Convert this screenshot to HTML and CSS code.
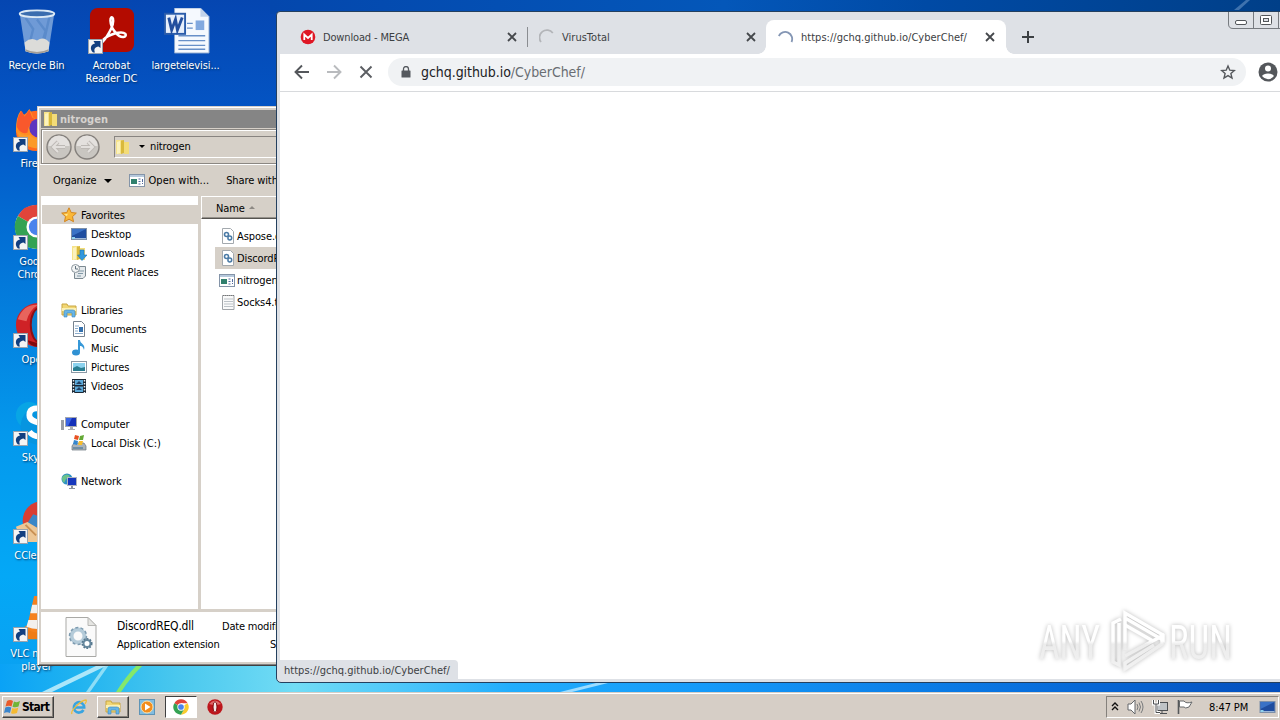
FILE: index.html
```html
<!DOCTYPE html>
<html lang="en">
<head>
  <meta charset="UTF-8">
  <title>Desktop</title>
  <link rel="stylesheet" href="styles.css">
</head>
<body>
  <svg class="defs" width="0" height="0">
    <symbol id="shortcut" viewBox="0 0 15 15">
      <rect x=".5" y=".5" width="14" height="14" fill="#f4f4f4" stroke="#9aa3ad"/>
      <path d="M5 13.500C1.500 10 2.500 5.500 7 4.500L5.500 2H12.500V9L10.500 7.500C7 8 5.500 10 7 13.500Z" fill="#123f80"/>
    </symbol>
    <symbol id="folder" viewBox="0 0 16 16">
      <path d="M1 1H7V15H1Z" fill="#f6e38a"/>
      <path d="M6 1.500L9 1V14L6 15Z" fill="#d9b93c"/>
      <path d="M9 3H14V15H9Z" fill="#f3dc78"/>
      <path d="M2 3L5 2V14L2 15Z" fill="#fbf2bd"/>
    </symbol>
    <symbol id="library" viewBox="0 0 16 16">
      <path d="M1 2H6L7 4H15V13H1Z" fill="#f1d674" stroke="#c9a640"/>
      <path d="M1 6H15V9H1Z" fill="#fbf0b4"/>
      <path d="M3 15V10Q3 8 5 8H12Q14 8 14 10V15H11V11H6V15Z" fill="#68b5e6" stroke="#3b86bf" stroke-width=".6"/>
    </symbol>
    <symbol id="monitor" viewBox="0 0 16 16">
      <rect x=".5" y="2.500" width="15" height="11" fill="#1f4d9f" stroke="#7e90a8"/>
      <path d="M1 3H15L1 10Z" fill="#3a72c6"/>
      <path d="M1 12H15V13H1Z" fill="#9db7d8"/>
      <path d="M1 11H4V13H1Z" fill="#8fd2ed"/>
    </symbol>
    <symbol id="dll" viewBox="0 0 14 16">
      <path d="M1.500 .5H9.500L12.500 3.500V15.500H1.500Z" fill="#fff" stroke="#a3a9ae"/>
      <circle cx="5.500" cy="6.500" r="2" fill="none" stroke="#4b7ba6" stroke-width="1.600"/>
      <circle cx="8.800" cy="10" r="1.900" fill="none" stroke="#4b7ba6" stroke-width="1.500"/>
    </symbol>
    <symbol id="program" viewBox="0 0 16 13">
      <rect x=".5" y=".5" width="15" height="12" fill="#fff" stroke="#8494a8"/>
      <path d="M1 1H15V3H1Z" fill="#b7c9dd"/>
      <path d="M2 5H8V10H2Z" fill="#30806d"/>
      <path d="M9.500 5H11.500M9.500 7.500H11.500M9.500 10H11.500M13.500 5V8M13.500 9V10" stroke="#536a9f"/>
    </symbol>
    <symbol id="chrome" viewBox="0 0 48 48">
      <circle cx="24" cy="24" r="23" fill="#fff"/>
      <path d="M24 24L4 12.500A23 23 0 0 1 44 12.500H24Z" fill="#e0443a"/>
      <path d="M24 24L44 12.500A23 23 0 0 1 24 47L34 29Z" fill="#f9cb2e"/>
      <path d="M24 24L34 29L24 47A23 23 0 0 1 4 12.500Z" fill="#34a253"/>
      <circle cx="24" cy="24" r="11" fill="#fff"/>
      <circle cx="24" cy="24" r="8.500" fill="#4a83ec"/>
    </symbol>
    <symbol id="close" viewBox="0 0 10 10">
      <path d="M1 1L9 9M9 1L1 9" stroke="#45484c" stroke-width="1.800"/>
    </symbol>
  </svg>

  <div class="desktop">
    <svg class="wallpaper" viewBox="0 0 1280 720" preserveAspectRatio="none">
      <defs>
        <linearGradient id="sky" x1="0" y1="0" x2="0" y2="1">
          <stop offset="0" stop-color="#0546b1"/>
          <stop offset=".17" stop-color="#0356c6"/>
          <stop offset=".35" stop-color="#0372d6"/>
          <stop offset=".6" stop-color="#0498ec"/>
          <stop offset=".8" stop-color="#04a8f6"/>
          <stop offset="1" stop-color="#0c9ef0"/>
        </linearGradient>
        <linearGradient id="top" x1="0" y1="0" x2="1" y2="0">
          <stop offset="0" stop-color="#0447ad"/>
          <stop offset=".45" stop-color="#0457b9"/>
          <stop offset=".65" stop-color="#004aa5"/>
          <stop offset="1" stop-color="#003f88"/>
        </linearGradient>
        <linearGradient id="floor" x1="0" y1="0" x2="1" y2="0">
          <stop offset="0" stop-color="#0aa2f6"/>
          <stop offset=".06" stop-color="#20b3f0"/>
          <stop offset=".14" stop-color="#4ac8ee"/>
          <stop offset=".23" stop-color="#72dcf5"/>
          <stop offset=".31" stop-color="#4fc8fa"/>
          <stop offset=".4" stop-color="#22adfc"/>
          <stop offset=".55" stop-color="#159af9"/>
          <stop offset=".8" stop-color="#0870de"/>
          <stop offset="1" stop-color="#044ebc"/>
        </linearGradient>
      </defs>
      <rect width="1280" height="720" fill="url(#sky)"/>
      <rect x="270" width="1010" height="14" fill="url(#top)"/>
      <rect y="664" width="1280" height="30" fill="url(#floor)"/>
      <path d="M42 692L98 665H108L52 692Z" fill="#c5f0fb" opacity=".85"/>
      <path d="M86 692L105 665H109L90 692Z" fill="#b8eefa" opacity=".7"/>
      <path d="M116 692Q126 676 137 665H143Q130 678 121 692Z" fill="#84e86a"/>
      <path d="M560 692L600 682H612L572 692Z" fill="#9ddcff"/>
      <path d="M1234 10L1246 0H1250L1239 10Z" fill="#3e72ae"/>
    </svg>

    <div class="shortcut recycle">
      <svg viewBox="0 0 48 48">
        <path d="M6 6L12 45Q24 50 36 45L42 6Z" fill="#a9c6e8" opacity=".65"/>
        <path d="M12 10L20 22L17 34M24 12L33 24L30 34M37 9L31 36" fill="none" stroke="#5b8bcb" stroke-width="2.500"/>
        <path d="M11 36Q18 30 24 34Q31 29 37 36L36 45Q24 50 12 45Z" fill="#dcdcd9"/>
        <path d="M12 43Q24 49 36 43V45Q24 50 12 45Z" fill="#a39d96"/>
        <ellipse cx="24" cy="6" rx="18" ry="3.500" fill="#3b6daf" stroke="#dce9f5" stroke-width="2"/>
      </svg>
      <span>Recycle Bin</span>
    </div>
    <div class="shortcut acrobat">
      <svg viewBox="0 0 48 48">
        <rect x="1" width="46" height="46" rx="8" fill="#b30b00"/>
        <path d="M12 37C17 34 27 18 25 11C22 6 20 17 28 26C34 33 40 30 38 27C34 23 20 28 15 33Q10 38 12 37Z" fill="none" stroke="#fff" stroke-width="2.600"/>
      </svg>
      <svg class="arrow"><use href="#shortcut"/></svg>
      <span>Acrobat<br>Reader DC</span>
    </div>
    <div class="shortcut word">
      <svg viewBox="0 0 48 48">
        <path d="M11 0H38L47 9V47H11Z" fill="#f5f9fe" stroke="#8ba6cf"/>
        <path d="M38 0V9H47Z" fill="#c2d3ea"/>
        <path d="M15 29H43M15 34H43M15 39H43M15 43H43M24 16H30M24 21H30" stroke="#6890c8" stroke-width="1.400"/>
        <rect x="33" y="13" width="9" height="10" fill="#82a9df"/>
        <rect x="1" y="6" width="21" height="21" fill="#e7effb" stroke="#2a5caa" stroke-width="2"/>
        <path d="M5 10L8 23L12 12L14 23L19 10" fill="none" stroke="#234f9e" stroke-width="3"/>
      </svg>
      <span>largetelevisi...</span>
    </div>
    <div class="shortcut firefox">
      <svg viewBox="0 0 48 48">
        <circle cx="23" cy="26" r="21" fill="#ff6a22"/>
        <path d="M2 26Q2 11 7 5L11 10L16 3Q19 7 20 12L34 20V38Q16 48 6 36Z" fill="#ff8e22"/>
        <path d="M3 22Q3 11 8 5L11 11L16 4L19 12L25 16Q14 18 14 28Q7 30 3 22Z" fill="#f9582c"/>
        <circle cx="26" cy="23" r="10" fill="#5e35c0"/>
        <path d="M4 27Q12 32 17 30Q21 36 30 34V44Q10 46 4 27Z" fill="#fb9a2a"/>
      </svg>
      <svg class="arrow"><use href="#shortcut"/></svg>
      <span>Firefox</span>
    </div>
    <div class="shortcut google">
      <svg><use href="#chrome"/></svg>
      <svg class="arrow"><use href="#shortcut"/></svg>
      <span>Google<br>Chrome</span>
    </div>
    <div class="shortcut opera">
      <svg viewBox="0 0 48 48">
        <ellipse cx="25" cy="24" rx="23" ry="23" fill="#cf2226"/>
        <path d="M4 18Q10 2 25 3Q16 8 13 20Z" fill="#e8645d"/>
        <path d="M14 40Q16 46 25 47V43Z" fill="#7f090e"/>
        <ellipse cx="27" cy="24" rx="9.500" ry="18" fill="#0b80cf" stroke="#8d0f14" stroke-width="2"/>
      </svg>
      <svg class="arrow"><use href="#shortcut"/></svg>
      <span>Opera</span>
    </div>
    <div class="shortcut skype">
      <svg viewBox="0 0 48 48">
        <circle cx="16" cy="16" r="14" fill="#08a5e5"/>
        <circle cx="27" cy="27" r="20" fill="#0795e0"/>
        <path d="M36 12Q16 4 16 16C16 26 36 22 36 31C36 40 21 40 16 33" fill="none" stroke="#fff" stroke-width="6"/>
      </svg>
      <svg class="arrow"><use href="#shortcut"/></svg>
      <span>Skype</span>
    </div>
    <div class="shortcut ccleaner">
      <svg viewBox="0 0 48 48">
        <circle cx="30" cy="24" r="21" fill="#d93e32"/>
        <path d="M14 26L20 17L34 22L26 32Z" fill="#3a87c7"/>
        <path d="M2 30L14 25L29 34L25 46H8Z" fill="#edc796"/>
        <path d="M12 28L23 39" stroke="#c89054" stroke-width="2"/>
      </svg>
      <svg class="arrow"><use href="#shortcut"/></svg>
      <span>CCleaner</span>
    </div>
    <div class="shortcut vlc">
      <svg viewBox="0 0 48 48">
        <path d="M8 39L12 31H37L42 45H6Z" fill="#ef7c17"/>
        <path d="M21 0H27L37 35Q25 41 13 35Z" fill="#f5811e"/>
        <path d="M19 9H30L32 18H17ZM15 25H34L36 32Q25 37 13 32Z" fill="#f3f0ed"/>
      </svg>
      <svg class="arrow"><use href="#shortcut"/></svg>
      <span>VLC media<br>player</span>
    </div>

    <div class="explorer">
      <div class="title-bar">
        <svg width="16" height="16"><use href="#folder"/></svg>
        <span>nitrogen</span>
      </div>
      <div class="address-row">
        <svg class="nav-buttons" width="56" height="28" viewBox="0 0 56 28">
          <circle cx="14" cy="14" r="12" fill="#c9c6c1" stroke="#85817d" stroke-width="1.400"/>
          <path d="M3.500 13A10.500 10.500 0 0 1 24.500 13Z" fill="#e4e1de"/>
          <path d="M20 14H9M13 9L8 14L13 19" fill="none" stroke="#bdb9b5" stroke-width="4"/>
          <path d="M20 14H9M13 9L8 14L13 19" fill="none" stroke="#e3e0dd" stroke-width="2"/>
          <circle cx="42" cy="14" r="12" fill="#c9c6c1" stroke="#85817d" stroke-width="1.400"/>
          <path d="M31.500 13A10.500 10.500 0 0 1 52.500 13Z" fill="#e4e1de"/>
          <path d="M36 14H47M43 9L48 14L43 19" fill="none" stroke="#bdb9b5" stroke-width="4"/>
          <path d="M36 14H47M43 9L48 14L43 19" fill="none" stroke="#e3e0dd" stroke-width="2"/>
        </svg>
        <div class="address">
          <svg width="16" height="16"><use href="#folder"/></svg>
          <i class="caret small"></i>
          <span>nitrogen</span>
        </div>
      </div>
      <div class="command-bar">
        <span>Organize</span>
        <i class="caret"></i>
        <svg width="16" height="13"><use href="#program"/></svg>
        <span class="open">Open with...</span>
        <span class="share">Share with</span>
      </div>
      <div class="panes">
        <ul class="tree">
          <li class="root current">
            <svg viewBox="0 0 16 16"><path d="M8 .8L10.200 5.500L15.300 6.100L11.500 9.600L12.500 14.700L8 12.200L3.500 14.700L4.500 9.600L.7 6.100L5.800 5.500Z" fill="#fab838" stroke="#d28520"/><path d="M8 3L6.500 7L3 7.500L6 9Z" fill="#fff0a0"/></svg>
            Favorites
          </li>
          <li><svg><use href="#monitor"/></svg>Desktop</li>
          <li><svg viewBox="0 0 16 16"><use href="#folder" width="16" height="16"/><path d="M9 5H13V10H16L11 15.500L6.500 10H9Z" fill="#3198dd" stroke="#1774b2" stroke-width=".6"/></svg>Downloads</li>
          <li><svg viewBox="0 0 16 16"><path d="M5.500 2.500H14.500V12L12 14.500H3.500V9" fill="#e4e9ec" stroke="#7c8991"/><path d="M7 7H13M7 9.500H12M6 12H10" stroke="#8198a6"/><circle cx="4.500" cy="4.500" r="4" fill="#f3f5f5" stroke="#8b959c"/><path d="M4.500 2V5H7" fill="none" stroke="#61727e"/></svg>Recent Places</li>
          <li class="root group">
            <svg><use href="#library"/></svg>
            Libraries
          </li>
          <li><svg viewBox="0 0 16 16"><path d="M2.500 .5H10.500L13.500 3.500V15.500H2.500Z" fill="#fff" stroke="#77828e"/><path d="M4 5H8M4 7.500H7M4 10H7M4 12.500H12" stroke="#8aabcb"/><path d="M8 6H12V11H8Z" fill="#3470ad"/></svg>Documents</li>
          <li><svg viewBox="0 0 16 16"><ellipse cx="5" cy="12.500" rx="4" ry="3" fill="#2f91d3"/><path d="M7 12V0H9C9 4 15 4 13 10C12 6 10 6 9 6V12Z" fill="#3698d8"/></svg>Music</li>
          <li><svg viewBox="0 0 16 16"><rect x=".5" y="2.500" width="15" height="11" fill="#fff" stroke="#8b99a5"/><path d="M2 4H14V12H2Z" fill="#8bd2ef"/><path d="M2 9L6 7L10 9L14 8V12H2Z" fill="#297e92"/></svg>Pictures</li>
          <li><svg viewBox="0 0 16 16"><rect x="1" y="1" width="14" height="14" fill="#1b2835"/><path d="M4 2H12V7H4ZM4 8.500H12V14H4Z" fill="#5ba8d8"/><path d="M2.500 2V15M13.500 2V15" stroke="#e8eff5" stroke-width="1.500" stroke-dasharray="1.500 1.500"/><path d="M8 3L11 6H5ZM8 9L11 12H5Z" fill="#213f61"/></svg>Videos</li>
          <li class="root group">
            <svg viewBox="0 0 16 16"><rect x="4.500" y="1.500" width="11" height="9" fill="#1431b9" stroke="#a3a7af"/><path d="M5 2H11L7 10H5Z" fill="#3964e3"/><path d="M9 11H12V13H14V14H7V13H9Z" fill="#a9adb3"/><path d="M0 4H3V14H0Z" fill="#9a9ea6"/></svg>
            Computer
          </li>
          <li><svg viewBox="0 0 16 16"><path d="M1 11L3 8H13L15 11V15H1Z" fill="#aab3bb" stroke="#68737c" stroke-width=".7"/><path d="M4 0L8 1L7 5L3 4Z" fill="#e85122"/><path d="M9 1L13 0L12 5L8 5Z" fill="#64a935"/><path d="M3 5L7 6L6 10L2 9Z" fill="#3587cf"/><path d="M8 6L12 6L11 10L7 10Z" fill="#f7bc2c"/><path d="M2 12H12V14H2Z" fill="#6f8ea4"/></svg>Local Disk (C:)</li>
          <li class="root group">
            <svg viewBox="0 0 16 16"><circle cx="6" cy="6" r="5.500" fill="#2d8fc4"/><path d="M2 3Q6 0 9 3L5 6L3 10Q-.5 6 2 3Z" fill="#6bc38c"/><rect x="6.500" y="4.500" width="9" height="8" fill="#1738bd" stroke="#b0b5c0"/><path d="M10 13H12V15H14V16H8V15H10Z" fill="#8b929c"/></svg>
            Network
          </li>
        </ul>
        <div class="files">
          <div class="column-head">Name <i></i></div>
          <div class="file"><svg width="14" height="16"><use href="#dll"/></svg>Aspose.dll</div>
          <div class="file selected"><svg width="14" height="16"><use href="#dll"/></svg>DiscordREQ.dll</div>
          <div class="file"><svg width="16" height="13"><use href="#program"/></svg>nitrogen.exe</div>
          <div class="file"><svg width="14" height="16" viewBox="0 0 14 16"><path d="M1.500 1.500H13V15.500H1.500Z" fill="#fafafa" stroke="#a0a4a8"/><path d="M3 5H12M3 7.500H12M3 10H12M3 12.500H12" stroke="#bcc2c7"/><path d="M2 1.500H13" stroke="#777" stroke-dasharray="1 1"/></svg>Socks4.txt</div>
        </div>
      </div>
      <div class="details">
        <svg width="32" height="40" viewBox="0 0 32 40">
          <path d="M1 .5H23L31 8.500V39.500H1Z" fill="#fafafa" stroke="#a9a9a6"/>
          <path d="M23 .5V8.500H31Z" fill="#e5e5e2" stroke="#b7b7b4"/>
          <circle cx="13" cy="19" r="6.500" fill="none" stroke="#b4cbd9" stroke-width="4"/>
          <circle cx="13" cy="19" r="8.500" fill="none" stroke="#7d9bb0" stroke-width="1.500" stroke-dasharray="3 2.300"/>
          <circle cx="22" cy="26.500" r="3.500" fill="#fff" stroke="#66889e" stroke-width="2"/>
          <circle cx="22" cy="26.500" r="4.800" fill="none" stroke="#56788e" stroke-width="1.500" stroke-dasharray="1.800 1.300"/>
        </svg>
        <div class="file-info">
          <span class="name">DiscordREQ.dll</span>
          <span>Application extension</span>
        </div>
        <div class="file-info meta">
          <span>Date modified:</span>
          <span>Size:</span>
        </div>
      </div>
    </div>

    <div class="browser">
      <div class="tab-strip">
        <div class="tab">
          <svg class="favicon" viewBox="0 0 16 16"><circle cx="8" cy="8" r="7.300" fill="#df1725"/><path d="M4.300 11V5.500L8 9L11.700 5.500V11" fill="none" stroke="#fff" stroke-width="1.800"/></svg>
          <span>Download - MEGA</span>
          <svg class="close"><use href="#close"/></svg>
        </div>
        <div class="tab divided">
          <svg class="favicon" viewBox="0 0 16 16"><path d="M2 13A7 7 0 0 1 13.800 4" fill="none" stroke="#b3b5b9" stroke-width="1.800"/></svg>
          <span>VirusTotal</span>
          <svg class="close"><use href="#close"/></svg>
        </div>
        <div class="tab active">
          <svg class="favicon" viewBox="0 0 16 16"><path d="M.8 7A7 7 0 0 1 13.500 13" fill="none" stroke="#8496b4" stroke-width="1.800"/></svg>
          <span>https://gchq.github.io/CyberChef/</span>
          <svg class="close"><use href="#close"/></svg>
        </div>
        <svg class="new-tab" viewBox="0 0 12 12"><path d="M6 0V12M0 6H12" stroke="#3c4043" stroke-width="2"/></svg>
        <svg class="caption-buttons" viewBox="0 0 52 17">
          <path d="M.5 0V12Q.5 16.500 5 16.500H52M25.500 0V16.500M50.500 0V16.500" fill="none" stroke="#777b80"/>
          <rect x="7.500" y="8.500" width="11" height="4" rx="1.500" fill="#fff" stroke="#53575b"/>
          <rect x="32.500" y="3.500" width="11" height="9" rx="1" fill="#fff" stroke="#53575b"/>
          <rect x="35.500" y="6.500" width="5" height="3" fill="#dee1e6" stroke="#53575b"/>
        </svg>
      </div>
      <div class="toolbar">
        <svg class="tool" viewBox="0 0 16 16"><path d="M15 8H2M8 1.500L1.500 8L8 14.500" fill="none" stroke="#54575b" stroke-width="1.900"/></svg>
        <svg class="tool" viewBox="0 0 16 16"><path d="M1 8H14M8 1.500L14.500 8L8 14.500" fill="none" stroke="#b9bbbe" stroke-width="1.900"/></svg>
        <svg class="tool" viewBox="0 0 16 16"><path d="M2.500 2.500L13.500 13.500M13.500 2.500L2.500 13.500" stroke="#5b5e62" stroke-width="1.900"/></svg>
        <div class="omnibox">
          <svg class="lock" viewBox="0 0 10 12"><path d="M1 4.500H9Q9.500 4.500 9.500 5V11Q9.500 11.500 9 11.500H1Q.5 11.500 .5 11V5Q.5 4.500 1 4.500Z" fill="#55595e"/><path d="M2.500 5V3A2.500 2.500 0 0 1 7.500 3V5" fill="none" stroke="#55595e" stroke-width="1.300"/></svg>
          <span class="url">gchq.github.io<span>/CyberChef/</span></span>
          <svg class="star" viewBox="0 0 16 16"><path d="M8 2L9.800 6.200L14.300 6.600L10.900 9.600L12 14L8 11.600L4 14L5.100 9.600L1.700 6.600L6.200 6.200Z" fill="none" stroke="#54575b" stroke-width="1.400"/></svg>
        </div>
        <svg class="avatar" viewBox="0 0 20 20"><circle cx="10" cy="10" r="9.500" fill="#54575b"/><circle cx="10" cy="6.500" r="3" fill="#fff"/><path d="M4 14Q5.500 11.500 10 11.500T16 14Q13.500 17.200 10 17.200T4 14Z" fill="#fff"/></svg>
      </div>
      <div class="page">
        <svg class="watermark" viewBox="0 0 200 66">
          <defs>
            <linearGradient id="mark" gradientUnits="userSpaceOnUse" x1="0" y1="0" x2="0" y2="66">
              <stop offset="0" stop-color="#fff"/>
              <stop offset=".5" stop-color="#fff"/>
              <stop offset=".55" stop-color="#ececec"/>
              <stop offset="1" stop-color="#f3f3f3"/>
            </linearGradient>
          </defs>
          <g fill="url(#mark)">
            <text x="3" y="51" textLength="61" lengthAdjust="spacingAndGlyphs">ANY</text>
            <text x="133" y="51" textLength="63" lengthAdjust="spacingAndGlyphs">RUN</text>
          </g>
          <g fill="none" stroke="url(#mark)" stroke-width="3.500">
            <path d="M85 11L77 15V54L83 57V15"/>
            <path d="M89 42V5L127 27V32L89 10"/>
            <path d="M89 48L126 28V36L89 61V55L118 37"/>
            <path d="M89 17L117 33"/>
          </g>
        </svg>
        <div class="status">https://gchq.github.io/CyberChef/</div>
      </div>
    </div>

    <div class="taskbar">
      <button class="start">
        <svg viewBox="0 0 17 16"><path d="M3 2Q6 0 9 2L7.500 7.500Q5 6 1.500 7.500Z" fill="#e95a2a"/><path d="M10 2.500Q13 4 16 2L14.500 7.500Q11.500 9 8.500 7.700Z" fill="#70b536"/><path d="M1.300 8.500Q4.500 7 7.300 8.500L6 14Q3 12.500 0 14Z" fill="#3a85cc"/><path d="M8.300 9Q11.500 10.300 14.300 8.500L13 14Q10 15.500 7 14.300Z" fill="#f5ba32"/></svg>
        Start
      </button>
      <div class="task">
        <svg viewBox="0 0 16 16"><path d="M12.500 11A5.200 5.200 0 1 1 13.200 8.500H4" fill="none" stroke="#38a4e0" stroke-width="2.600"/><path d="M1 15C-1 12 10 1 15 1Q16 2 14 5" fill="none" stroke="#eebd38" stroke-width="1.300"/></svg>
      </div>
      <div class="task raised"><svg><use href="#library"/></svg></div>
      <div class="task">
        <svg viewBox="0 0 16 16"><rect x=".5" y=".5" width="15" height="15" fill="#81bde1" stroke="#5e94b6"/><circle cx="8" cy="8" r="6" fill="#f28d1d" stroke="#ffe1a8"/><path d="M6 4.500L11.500 8L6 11.500Z" fill="#fff"/></svg>
      </div>
      <div class="task pressed"><svg><use href="#chrome"/></svg></div>
      <div class="task">
        <svg viewBox="0 0 16 16"><circle cx="8" cy="8" r="7.700" fill="#bd161c"/><path d="M2 5Q8-2 14 5Q8 7 2 5Z" fill="#df696a"/><ellipse cx="8" cy="8" rx="2" ry="5.300" fill="#f5e9e8" stroke="#820c11"/></svg>
      </div>
      <div class="tray">
        <svg width="8" height="10" viewBox="0 0 8 10"><path d="M1 4L4 1L7 4M1 8L4 5L7 8" fill="none" stroke="#111" stroke-width="1.400"/></svg>
        <svg width="17" height="16" viewBox="0 0 17 16"><path d="M1 5H4L8 1V15L4 11H1Z" fill="#fff" stroke="#64676a"/><path d="M10 5Q12 8 10 11M12 3.500Q15 8 12 12.500M14 2Q18 8 14 14" fill="none" stroke="#777a7c"/></svg>
        <svg width="17" height="16" viewBox="0 0 17 16"><rect x="5.500" y="3.500" width="10" height="8" fill="#bfc3c6" stroke="#4c4f52"/><path d="M8 14.500H15M10 12V14" stroke="#4c4f52"/><path d="M1.500 1V5H6.500V1M4 5V13.500H8" fill="none" stroke="#fff" stroke-width="3"/><path d="M1.500 1V5H6.500V1M4 5V13.500H8" fill="none" stroke="#4c4f52"/></svg>
        <svg width="17" height="16" viewBox="0 0 17 16"><path d="M1.500 1V15" stroke="#55585a" stroke-width="1.600"/><path d="M2.500 2H7Q9 5 15 3L12 8Q8 10 7 8H2.500Z" fill="#fff" stroke="#66696b"/></svg>
        <span>8:47 PM</span>
        <svg width="17" height="16"><use href="#monitor"/></svg>
      </div>
    </div>
  </div>
</body>
</html>
```

FILE: styles.css
```css
* {
  box-sizing: border-box;
}
body {
  margin: 0;
  font-family: "DejaVu Sans Condensed", "DejaVu Sans", Tahoma, sans-serif;
  font-stretch: condensed;
  font-size: 11px;
  line-height: 13px;
  letter-spacing: -0.1px;
  color: #000;
}
svg {
  display: block;
  flex: none;
}
.defs {
  position: absolute;
}
.desktop {
  position: relative;
  width: 1280px;
  height: 720px;
  overflow: hidden;
}
.wallpaper {
  width: 1280px;
  height: 720px;
}

/* desktop shortcuts */
.shortcut {
  position: absolute;
  left: -1px;
  width: 75px;
  display: flex;
  flex-direction: column;
  align-items: center;
  color: #fff;
  text-align: center;
  white-space: nowrap;
  text-shadow: 1px 1px 2px #003060;
}
.shortcut svg {
  width: 46px;
  height: 46px;
  margin-bottom: 5px;
}
.shortcut .arrow {
  position: absolute;
  left: 14px;
  top: 31px;
  width: 15px;
  height: 15px;
}
.recycle { top: 8px; }
.acrobat { top: 8px; left: 74px; }
.word { top: 8px; left: 148px; }
.word svg { margin-left: 2px; }
.firefox { top: 106px; }
.google { top: 204px; }
.opera { top: 302px; }
.skype { top: 400px; }
.ccleaner { top: 498px; }
.vlc { top: 596px; }

/* explorer window */
.explorer {
  position: absolute;
  left: 37px;
  top: 106px;
  width: 700px;
  height: 560px;
  display: flex;
  flex-direction: column;
  padding: 2px;
  border: 1px solid #d6d0ca;
  border-right-color: #404040;
  border-bottom-color: #404040;
  box-shadow: inset 1px 1px #fff, inset -1px -1px #808080;
  background: #d6d0c8;
}
.title-bar {
  display: flex;
  align-items: center;
  gap: 1px;
  height: 18px;
  margin: 1px 1px 0;
  padding-left: 2px;
  background: #858585;
  color: #d6d2ce;
  font-weight: bold;
}
.title-bar span {
  letter-spacing: 0.05px;
}
.address-row {
  display: flex;
  align-items: center;
  height: 35px;
  margin: 1px 1px 0;
  padding-left: 3px;
  border: 1px solid #8b8782;
  box-shadow: inset 1px 1px #fff;
}
.address {
  display: flex;
  align-items: center;
  flex: 1;
  height: 22px;
  margin-left: 13px;
  border: 1px solid #888480;
  border-right-color: #fff;
  border-bottom-color: #fff;
}
.address span {
  margin-left: 5px;
}
.caret {
  border: 4px solid transparent;
  border-top-color: #000;
  border-bottom: 0;
}
.caret.small {
  border-width: 3px 3px 0;
  margin-left: 8px;
}
.command-bar {
  display: flex;
  align-items: center;
  height: 32px;
  padding-left: 13px;
  border-top: 1px solid #fff;
  white-space: nowrap;
}
.command-bar .caret {
  margin: 0 17px 0 7px;
}
.command-bar svg {
  margin-right: 4px;
}
.command-bar .open {
  letter-spacing: 0.05px;
}
.command-bar .share {
  margin-left: 17px;
}
.panes {
  display: flex;
  height: 413px;
  margin-left: 1px;
}
.tree {
  width: 157px;
  margin: 0;
  padding: 9px 0 0;
  background: #fff;
  list-style: none;
}
.tree li {
  display: flex;
  align-items: center;
  gap: 4px;
  height: 19px;
  padding: 2px 0 0 30px;
}
.tree .root {
  padding-left: 20px;
}
.tree .group {
  margin-top: 19px;
}
.tree .current {
  margin-left: 1px;
  padding-left: 19px;
  background: #d6d0c8;
}
.tree svg {
  width: 16px;
  height: 16px;
  margin-top: -2px;
}
.files {
  flex: 1;
  margin-left: 3px;
  background: #fff;
}
.column-head {
  display: flex;
  align-items: center;
  gap: 4px;
  height: 23px;
  margin-bottom: 6px;
  padding: 2px 0 0 14px;
  border-top: 1px solid #fff;
  border-left: 1px solid #fff;
  border-bottom: 1px solid #55534f;
  box-shadow: inset 0 -1px #95918b;
  background: #d6d0c8;
}
.column-head i {
  margin-top: -2px;
  border: 3px solid transparent;
  border-top: 0;
  border-bottom-color: #8d8984;
}
.file {
  display: flex;
  align-items: center;
  height: 22px;
  margin-left: 14px;
  padding-left: 6px;
}
.file svg {
  margin-right: 2px;
}
.file svg[width="16"] {
  margin-left: -2px;
}
.file.selected {
  background: #d6d0c8;
}
.details {
  display: flex;
  flex: 1;
  margin: 3px 1px 1px;
  padding: 5px 0 0 24px;
  background: #fff;
}
.file-info {
  display: flex;
  flex-direction: column;
  gap: 5px;
  width: 105px;
  margin-left: 20px;
  padding-top: 3px;
  white-space: nowrap;
  letter-spacing: -0.2px;
}
.file-info .name {
  font-size: 12px;
}
.file-info.meta {
  margin-left: 0;
}
.meta span:last-child {
  margin-left: 48px;
}

/* browser window */
.browser {
  position: absolute;
  left: 276px;
  top: 11px;
  width: 1030px;
  height: 672px;
  display: flex;
  flex-direction: column;
  padding: 0 0 3px 3px;
  border: 1px solid #24405f;
  border-radius: 4px 0 0 5px;
  background: #dee1e6;
}
.tab-strip {
  display: flex;
  height: 42px;
  padding-top: 8px;
}
.tab {
  position: relative;
  display: flex;
  align-items: center;
  width: 247px;
  height: 34px;
  padding: 0 10px 0 20px;
  color: #3c4043;
}
.tab span {
  letter-spacing: 0.02px;
}
.tab:first-child span {
  letter-spacing: -0.15px;
}
.tab .favicon {
  width: 16px;
  height: 16px;
  margin-right: 7px;
}
.tab.divided {
  width: 231px;
  padding: 0 2px 0 12px;
}
.tab.divided::before {
  content: "";
  width: 1px;
  height: 20px;
  margin: 0 11px 0 -12px;
  background: #8a8d91;
}
.tab.active {
  width: 240px;
  margin-left: 8px;
  padding: 0 11px 0 12px;
  border-radius: 8px 8px 0 0;
  background: #fff;
}
.tab.active::before,
.tab.active::after {
  content: "";
  position: absolute;
  bottom: 0;
  left: -8px;
  width: 8px;
  height: 8px;
  background: radial-gradient(circle at 0 0, transparent 7.5px, #fff 8px);
}
.tab.active::after {
  left: 100%;
  background: radial-gradient(circle at 100% 0, transparent 7.5px, #fff 8px);
}
.close {
  width: 10px;
  height: 10px;
  margin-left: auto;
}
.new-tab {
  width: 12px;
  height: 12px;
  margin: 11px 0 0 16px;
}
.caption-buttons {
  width: 52px;
  height: 17px;
  margin: -8px 0 0 194px;
}
.toolbar {
  display: flex;
  align-items: center;
  gap: 16px;
  height: 38px;
  padding: 0 0 2px 14px;
  border-bottom: 1px solid #d8dadd;
  background: #fff;
}
.tool {
  width: 16px;
  height: 16px;
}
.omnibox {
  display: flex;
  align-items: center;
  width: 858px;
  height: 28px;
  margin-left: -2px;
  padding: 0 10px 0 13px;
  border-radius: 14px;
  background: #f0f2f4;
}
.lock {
  width: 10px;
  height: 12px;
}
.url {
  margin-left: 10px;
  color: #202124;
  font-size: 14px;
  line-height: 18px;
  letter-spacing: -0.05px;
}
.url span {
  color: #696d72;
}
.star {
  width: 16px;
  height: 16px;
  margin-left: auto;
}
.avatar {
  width: 20px;
  height: 20px;
  margin-left: -4px;
}
.page {
  position: relative;
  flex: 1;
  background: #fff;
}
.status {
  position: absolute;
  left: 0;
  bottom: 0;
  width: 178px;
  height: 19px;
  padding: 4px 4px 2px;
  border-top-right-radius: 4px;
  background: #dee1e6;
  color: #3c4043;
  letter-spacing: 0.02px;
}
.watermark {
  position: absolute;
  left: 756px;
  top: 516px;
  width: 200px;
  height: 66px;
  overflow: visible;
  font-family: "Liberation Sans Narrow", "Roboto", sans-serif;
  font-size: 49px;
  letter-spacing: 0;
  filter: drop-shadow(0 0 2px #bbb);
}

/* taskbar */
.taskbar {
  position: absolute;
  left: 0;
  bottom: 0;
  width: 1280px;
  height: 28px;
  display: flex;
  align-items: center;
  padding: 1px 1px 0 2px;
  border-top: 1px solid #d6cec6;
  box-shadow: inset 0 1px #fff;
  background: #d6cec6;
}
.start {
  display: flex;
  align-items: center;
  gap: 1px;
  width: 52px;
  height: 22px;
  margin-right: 9px;
  padding: 0 1px;
  border: 1px solid #fff;
  border-right-color: #404040;
  border-bottom-color: #404040;
  box-shadow: inset -1px -1px #858079;
  background: #d6cec6;
  color: #000;
  font: bold 12px "DejaVu Sans Condensed", "DejaVu Sans", sans-serif;
  letter-spacing: -0.7px;
}
.start svg {
  width: 17px;
  height: 16px;
}
.task {
  display: flex;
  align-items: center;
  justify-content: center;
  width: 32px;
  height: 22px;
  margin-right: 2px;
}
.task svg {
  width: 16px;
  height: 16px;
}
.task.raised {
  border: 1px solid #fff;
  border-right-color: #404040;
  border-bottom-color: #404040;
  box-shadow: inset -1px -1px #858079;
}
.task.pressed {
  border: 1px solid #404040;
  border-right-color: #fff;
  border-bottom-color: #fff;
  background: #fff;
}
.tray {
  display: flex;
  align-items: center;
  width: 173px;
  height: 22px;
  margin-left: auto;
  padding: 0 2px 0 4px;
  border: 1px solid #85817c;
  border-right-color: #fff;
  border-bottom-color: #fff;
}
.tray svg {
  margin-right: 8px;
}
.tray span {
  margin: 0 11px 0 7px;
  white-space: nowrap;
}
.tray svg:last-child {
  margin-right: 0;
}
```
